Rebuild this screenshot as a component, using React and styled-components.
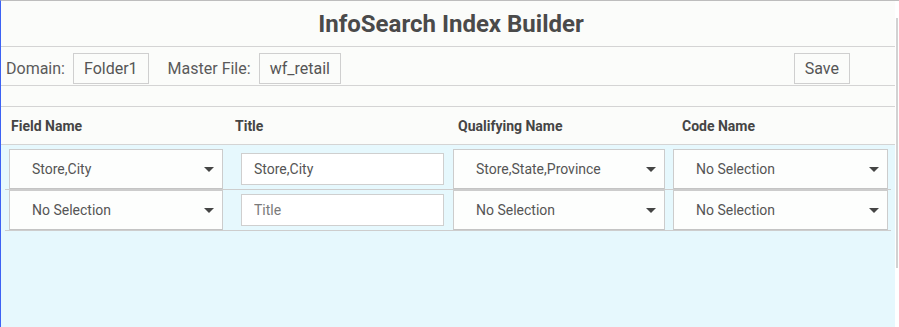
import React from 'react';
import styled, { createGlobalStyle } from 'styled-components';

const GlobalStyle = createGlobalStyle`
  html, body {
    margin: 0;
    padding: 0;
    background: #ffffff;
  }
  body {
    font-family: Roboto, "Liberation Sans", sans-serif;
  }
  * {
    box-sizing: border-box;
  }
`;

const Frame = styled.div`
  display: flex;
  height: 327px;
  border-top: 1px solid #bdbdbd;
  border-left: 1px solid #3c62f4;
  overflow: hidden;
`;

const Main = styled.div`
  flex: 1;
  display: flex;
  flex-direction: column;
  background: #fbfcfa;
  min-width: 0;
`;

const Gutter = styled.div`
  width: 4px;
  background: #ffffff;
  padding-top: 17px;
`;

const Thumb = styled.div`
  width: 2px;
  height: 250px;
  margin-left: 1px;
  background: #d2d2d2;
`;

const TitleBar = styled.h1`
  margin: 0;
  height: 46px;
  padding-left: 6px;
  border-bottom: 1px solid #d4d4d4;
  display: flex;
  align-items: center;
  justify-content: center;
  font-size: 24px;
  font-weight: 700;
  color: #4a4a4a;
`;

const Toolbar = styled.div`
  height: 39px;
  padding: 4px 0 0 5px;
  border-bottom: 1px solid #d4d4d4;
  display: flex;
  align-items: center;
`;

const Label = styled.span`
  font-size: 16px;
  color: #5a5a5a;
  margin-left: ${p => p.$gap || 0}px;
  margin-right: 8px;
`;

const ValueBox = styled.div`
  height: 31px;
  padding: 0 10px;
  border: 1px solid #cfcfcf;
  display: flex;
  align-items: center;
  font-size: 16px;
  color: #555555;
`;

const SaveButton = styled.button`
  height: 31px;
  margin-left: auto;
  margin-right: 45px;
  padding: 0 10px;
  border: 1px solid #cfcfcf;
  background: transparent;
  font-family: inherit;
  font-size: 16px;
  color: #555555;
`;

const Spacer = styled.div`
  height: 21px;
  border-bottom: 1px solid #d4d4d4;
`;

const HeaderRow = styled.div`
  height: 38px;
  padding-left: 10px;
  border-bottom: 1px solid #d4d4d4;
  display: grid;
  grid-template-columns: 224px 223px 224px 1fr;
  align-items: center;
  font-size: 14px;
  font-weight: 700;
  color: #454545;
`;

const Body = styled.div`
  flex: 1;
  background: #e6f8fd;
  padding-top: 4px;
`;

const Row = styled.div`
  width: 886px;
  height: 41px;
  margin-left: 4px;
  border-bottom: 1px solid #cdcdcd;
  display: flex;
  align-items: center;
`;

const SelectBox = styled.div`
  width: ${p => p.$width}px;
  margin-left: ${p => p.$offset}px;
  height: 40px;
  align-self: flex-start;
  padding: 0 8px 0 22px;
  border: 1px solid #cccccc;
  border-bottom-color: #c4c4c4;
  background: #fdfefd;
  display: flex;
  align-items: center;
  justify-content: space-between;
  font-size: 14px;
  color: #555555;
`;

const TextInput = styled.input`
  width: ${p => p.$width}px;
  margin-left: ${p => p.$offset}px;
  height: 32px;
  padding: 0 12px;
  border: 1px solid #cfcfcf;
  background: #ffffff;
  font-family: inherit;
  font-size: 14px;
  color: #555555;
  outline: none;

  &::placeholder {
    color: #7a7a7a;
  }
`;

const Caret = () => (
  <svg width="10" height="5" viewBox="0 0 10 5">
    <path d="M0 0 H10 L5 5 Z" fill="#454545" />
  </svg>
);

const Select = ({ value, width, offset }) => (
  <SelectBox $width={width} $offset={offset}>
    <span>{value}</span>
    <Caret />
  </SelectBox>
);

const rows = [
  { field: 'Store,City', title: 'Store,City', qualifying: 'Store,State,Province', code: 'No Selection' },
  { field: 'No Selection', title: '', qualifying: 'No Selection', code: 'No Selection' },
];

export default function App() {
  return (
    <>
      <GlobalStyle />
      <Frame>
        <Main>
          <TitleBar>InfoSearch Index Builder</TitleBar>
          <Toolbar>
            <Label>Domain:</Label>
            <ValueBox>Folder1</ValueBox>
            <Label $gap={19}>Master File:</Label>
            <ValueBox>wf_retail</ValueBox>
            <SaveButton>Save</SaveButton>
          </Toolbar>
          <Spacer />
          <HeaderRow>
            <span>Field Name</span>
            <span>Title</span>
            <span>Qualifying Name</span>
            <span>Code Name</span>
          </HeaderRow>
          <Body>
            {rows.map((r, i) => (
              <Row key={i}>
                <Select value={r.field} width={214} offset={4} />
                <TextInput $width={203} $offset={18} defaultValue={r.title} placeholder="Title" />
                <Select value={r.qualifying} width={212} offset={9} />
                <Select value={r.code} width={215} offset={8} />
              </Row>
            ))}
          </Body>
        </Main>
        <Gutter>
          <Thumb />
        </Gutter>
      </Frame>
    </>
  );
}
